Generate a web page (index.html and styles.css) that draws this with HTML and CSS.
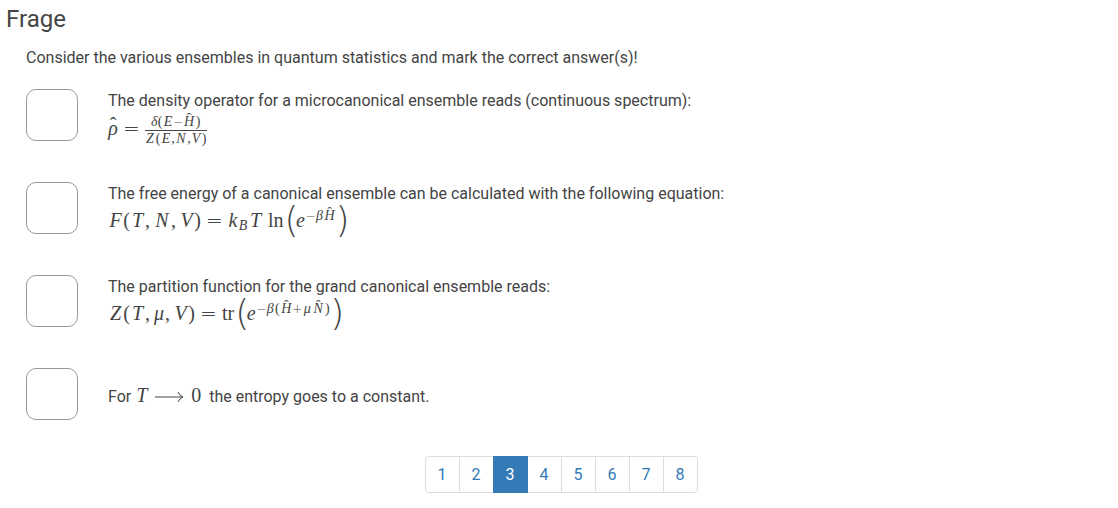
FILE: index.html
```html
<!DOCTYPE html>
<html lang="en">
<head>
<meta charset="utf-8">
<meta name="viewport" content="width=device-width, initial-scale=1">
<title>Frage</title>
<link rel="stylesheet" href="styles.css">
</head>
<body>
<main class="page">
  <h1 class="title">Frage</h1>
  <form class="question">
    <p class="prompt">Consider the various ensembles in quantum statistics and mark the correct answer(s)!</p>
    <div class="answer">
      <input class="box" type="checkbox" id="a1">
      <label class="text" for="a1">The density operator for a microcanonical ensemble reads (continuous spectrum):
        <span class="math line tall"><i class="s10 hat">ρ</i><b class="rel">=</b><span class="frac"><span class="num"><i class="s6">δ</i><b class="s6">(</b><i class="s10">E</i><b class="s10 op">−</b><i class="s12 hat">H</i><b class="s6">)</b></span><span class="den"><i class="s10">Z</i><b class="s6">(</b><i class="s10">E</i><b class="s4">,</b><i class="s12">N</i><b class="s4">,</b><i class="s10">V</i><b class="s6">)</b></span></span></span>
      </label>
    </div>
    <div class="answer">
      <input class="box" type="checkbox" id="a2">
      <label class="text" for="a2">The free energy of a canonical ensemble can be calculated with the following equation:
        <span class="math line"><i class="s15">F</i><b class="s7">(</b><i class="s15">T</i><b class="s8 comma">,</b><i class="s18">N</i><b class="s8 comma">,</b><i class="s15">V</i><b class="s7">)</b><b class="rel">=</b><i class="s10">k</i><span class="sub"><i class="s10">B</i></span><i class="s15">T</i><b class="fn">ln</b><b class="big">(</b><i class="s10">e</i><span class="sup"><b class="s10 op">−</b><i class="s8">β</i><i class="s12 hat">H</i></span><b class="big">)</b></span>
      </label>
    </div>
    <div class="answer">
      <input class="box" type="checkbox" id="a3">
      <label class="text" for="a3">The partition function for the grand canonical ensemble reads:
        <span class="math line"><i class="s15">Z</i><b class="s7">(</b><i class="s15">T</i><b class="s8 comma">,</b><i class="s12">μ</i><b class="s8 comma">,</b><i class="s15">V</i><b class="s7">)</b><b class="rel">=</b><b class="fn flush">tr</b><b class="big">(</b><i class="s10">e</i><span class="sup"><b class="s10 op">−</b><i class="s8">β</i><b class="s6">(</b><i class="s12 hat">H</i><b class="s10 op">+</b><i class="s10">μ</i><i class="s12 hat">N</i><b class="s6">)</b></span><b class="big">)</b></span>
      </label>
    </div>
    <div class="answer single">
      <input class="box" type="checkbox" id="a4">
      <label class="text" for="a4">For <span class="math"><i class="s13">T</i><svg class="arrow" viewBox="0 0 30 12" aria-label="goes to"><path d="M1 6H29M24 1Q25.500 4.500 29 6Q25.500 7.500 24 11" fill="none" stroke="currentColor"/></svg><b class="s10">0</b></span>&nbsp; the entropy goes to a constant.</label>
    </div>
  </form>
  <nav class="pages" aria-label="Questions">
    <a href="#1">1</a><a href="#2">2</a><a class="current" href="#3" aria-current="page">3</a><a href="#4">4</a><a href="#5">5</a><a href="#6">6</a><a href="#7">7</a><a href="#8">8</a>
  </nav>
</main>
</body>
</html>
```
FILE: styles.css
```css
* { box-sizing: border-box; }
body {
  margin: 0;
  background: #fff;
  color: #444;
  font: 16px/24px Roboto, sans-serif;
}
.page { padding: 4px 2px 0 6px; }
.title {
  margin: 0;
  font-size: 24px;
  line-height: 30px;
  font-weight: 400;
}
.question { padding: 12px 20px 0; }
.prompt { margin: 0 0 19px; }
.answer {
  display: flex;
  align-items: flex-start;
  gap: 30px;
  min-height: 93px;
}
.box {
  appearance: none;
  flex: none;
  width: 52px;
  height: 52px;
  margin: 0;
  border: 1px solid #999;
  border-radius: 10px;
  background: #fff;
}
.box:checked { background: #337ab7; }
.text { flex: 1; }
.single { min-height: 52px; }
.single .text { padding-top: 15px; }

/* Formulas: each symbol sits centred in a slot of fixed width */
.math {
  font: 20px/24px "Liberation Serif", serif;
  white-space: nowrap;
}
.line {
  display: block;
  line-height: 28px;
}
.tall { padding-top: 1px; }
.math b, .math i {
  display: inline-block;
  font-weight: 400;
  line-height: 16px;
  text-align: center;
}
.math .s4 { width: 4px; }
.math .s6 { width: 6px; }
.math .s7 { width: 7px; }
.math .s8 { width: 8px; }
.math .s10 { width: 10px; }
.math .s12 { width: 12px; }
.math .s13 { width: 13px; }
.math .s15 { width: 15px; }
.math .s18 { width: 18px; }
.math .comma { text-align: left; }
.math .rel, .math .op, .math .big {
  font-family: "DejaVu Sans Light", "DejaVu Sans", sans-serif;
  font-weight: 200;
}
.math .rel { width: 27px; }
.math .op { font-size: 12px; }
.math .fn { padding: 0 1px 0 5px; }
.math .flush { padding-left: 0; }
.math .big {
  width: 11px;
  font-size: 36px;
  line-height: 0;
  vertical-align: -5px;
}
.sup, .sub, .frac { font-size: 14px; }
.sup, .sub { line-height: 0; }
.sup { vertical-align: 7px; }
.sub { vertical-align: -3px; }
.frac {
  display: inline-flex;
  flex-direction: column;
  align-items: center;
  vertical-align: middle;
  line-height: 16px;
}
.den { border-top: 1px solid; }
.hat { position: relative; }
.hat::before {
  content: "ˆ";
  position: absolute;
  top: -3px;
  left: 0;
  width: 100%;
  font-style: normal;
  text-align: center;
}
.arrow {
  width: 30px;
  height: 12px;
  margin: 0 7px 0 6px;
  vertical-align: -1px;
}

.pages {
  display: flex;
  justify-content: center;
  padding-top: 36px;
}
.pages a {
  margin-left: -1px;
  padding: 6px 12px;
  border: 1px solid #ddd;
  color: #337ab7;
  line-height: 23px;
  text-decoration: none;
}
.pages a:first-child {
  margin-left: 0;
  border-radius: 4px 0 0 4px;
}
.pages a:last-child { border-radius: 0 4px 4px 0; }
.pages .current {
  position: relative;
  border-color: #337ab7;
  background: #337ab7;
  color: #fff;
}
```
